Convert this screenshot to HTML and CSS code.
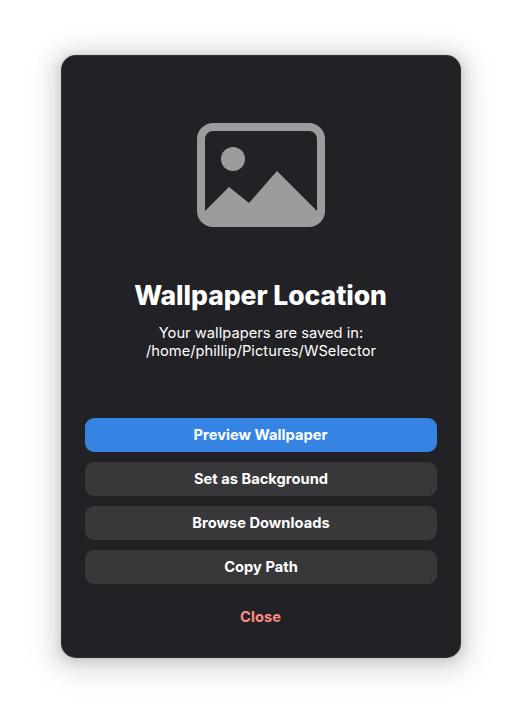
FILE: index.html
```html
<!DOCTYPE html>
<html lang="en">
<head>
<meta charset="utf-8">
<title>Wallpaper Location</title>
<link rel="stylesheet" href="styles.css">
</head>
<body>
<main class="dialog">
  <svg class="icon" viewBox="0 0 16 16" width="128" height="128" aria-hidden="true">
    <path fill-rule="evenodd" d="M2 1.5h12a2 2 0 0 1 2 2v9a2 2 0 0 1-2 2H2a2 2 0 0 1-2-2v-9a2 2 0 0 1 2-2zM2 2.5a1 1 0 0 0-1 1v9l3-3 2.5 2L10 7.5l5 5v-9a1 1 0 0 0-1-1z"/>
    <circle cx="4.5" cy="6" r="1.5"/>
  </svg>
  <h1 class="title">Wallpaper Location</h1>
  <p class="description">Your wallpapers are saved in:<br>/home/phillip/Pictures/WSelector</p>
  <div class="actions">
    <button class="button suggested">Preview Wallpaper</button>
    <button class="button">Set as Background</button>
    <button class="button">Browse Downloads</button>
    <button class="button">Copy Path</button>
  </div>
  <button class="button close">Close</button>
</main>
</body>
</html>
```

FILE: styles.css
```css
* { box-sizing: border-box; }
body {
  margin: 0;
  min-height: 725px;
  padding: 55px 61px 0;
  background: #fff;
  font-family: Inter, "Liberation Sans", sans-serif;
  font-size: 14.667px;
}
.dialog {
  display: flex;
  flex-direction: column;
  align-items: center;
  width: 400px;
  height: 603px;
  padding: 56px 24px 0;
  border-radius: 15px;
  background: #222226;
  color: #fff;
  box-shadow: inset 0 0 0 1px rgba(255,255,255,.07), 0 2px 8px 2px rgba(0,0,0,.09), 0 3px 20px 10px rgba(0,0,0,.09), 0 6px 32px 16px rgba(0,0,0,.04), 0 0 0 1px rgba(0,0,0,.04);
}
.icon { flex: none; fill: #9c9c9e; }
.title {
  margin: 40px 0 0;
  font-size: 26.5px;
  line-height: 32px;
  font-weight: 800;
  letter-spacing: -.04px;
  padding-right: 1px;
}
.description {
  margin: 13px 0 0;
  line-height: 18px;
  letter-spacing: .04px;
  text-align: center;
}
.actions {
  display: grid;
  gap: 10px;
  width: 100%;
  margin-top: 58px;
}
.button {
  height: 34px;
  padding: 0;
  border: 0;
  border-radius: 9px;
  background: #38383a;
  color: #fff;
  font: 700 14.667px/34px Inter, "Liberation Sans", sans-serif;
  letter-spacing: .03px;
}
.suggested {
  padding-right: 1px;
  background: #3584e4;
}
.close {
  width: 100%;
  margin-top: 16px;
  padding-right: 1px;
  background: transparent;
  color: #ff8a82;
}
```
